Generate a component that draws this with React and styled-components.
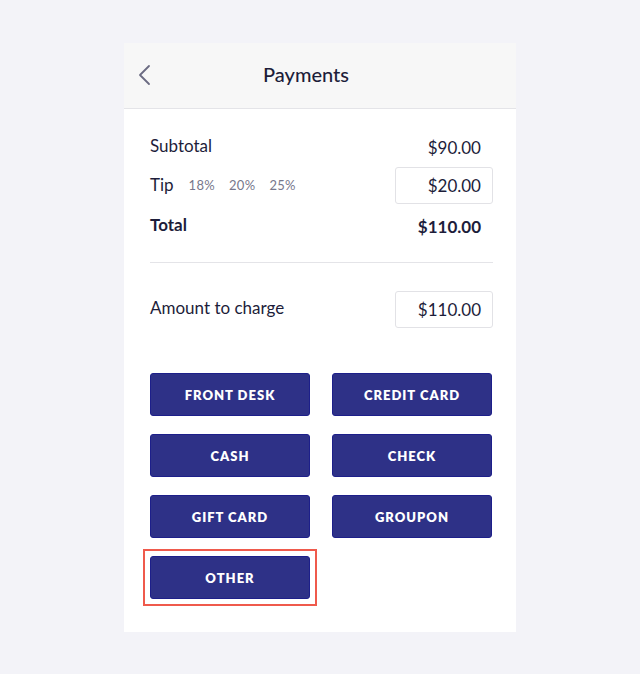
import React from 'react';
import styled, { createGlobalStyle } from 'styled-components';

const methods = ['FRONT DESK', 'CREDIT CARD', 'CASH', 'CHECK', 'GIFT CARD', 'GROUPON', 'OTHER'];

const App = () => {
    return (
        <Page>
            <GlobalStyle />
            <Card>
                <Header>
                    <Back>
                        <svg width="14" height="22" viewBox="0 0 14 22" fill="none">
                            <path d="M12 2 L3 11 L12 20" stroke="#6b6b82" strokeWidth="1.8" strokeLinecap="round" strokeLinejoin="round" />
                        </svg>
                    </Back>
                    <Title>Payments</Title>
                </Header>
                <Body>
                    <Summary>
                        <Row>
                            <Label>Subtotal</Label>
                            <Value>$90.00</Value>
                        </Row>
                        <Row>
                            <Label>
                                Tip
                                <Percents>
                                    <Percent>18%</Percent>
                                    <Percent>20%</Percent>
                                    <Percent>25%</Percent>
                                </Percents>
                            </Label>
                            <AmountBox>$20.00</AmountBox>
                        </Row>
                        <Row>
                            <Label bold>Total</Label>
                            <Value bold>$110.00</Value>
                        </Row>
                    </Summary>
                    <Divider />
                    <ChargeRow>
                        <Label shift={-4}>Amount to charge</Label>
                        <AmountBox>$110.00</AmountBox>
                    </ChargeRow>
                    <Methods>
                        {methods.map((m) => (
                            <Slot key={m} selected={m === 'OTHER'}>
                                <MethodButton>{m}</MethodButton>
                            </Slot>
                        ))}
                    </Methods>
                </Body>
            </Card>
        </Page>
    );
};

export default App;

const GlobalStyle = createGlobalStyle`
  html, body {
    margin: 0;
    padding: 0;
    background: #f3f3f8;
  }
  body {
    font-family: Lato, "Noto Sans", sans-serif;
    color: #1d1d3a;
  }
`;

const Page = styled.div`
  width: 640px;
  height: 674px;
  box-sizing: border-box;
  padding-top: 43px;
  display: flex;
  justify-content: center;
`;

const Card = styled.div`
  width: 392px;
  height: 589px;
  background: #ffffff;
  display: flex;
  flex-direction: column;
`;

const Header = styled.div`
  position: relative;
  height: 65px;
  background: #f7f7f7;
  border-bottom: 1px solid #e4e4e8;
  display: flex;
  align-items: center;
  justify-content: center;
`;

const Back = styled.div`
  position: absolute;
  left: 13px;
  top: 21px;
  display: flex;
`;

const Title = styled.div`
  font-size: 20px;
  font-weight: 500;
  color: #1d1d3a;
  margin-top: -3px;
  margin-right: 28px;
`;

const Body = styled.div`
  padding: 19px 23px 0 26px;
  display: flex;
  flex-direction: column;
`;

const Summary = styled.div`
  display: flex;
  flex-direction: column;
  gap: 3px;
`;

const Row = styled.div`
  display: flex;
  justify-content: space-between;
  align-items: center;
  min-height: 36px;
`;

const ChargeRow = styled(Row)`
  margin-top: 28px;
`;

const Label = styled.div`
  display: flex;
  align-items: center;
  font-size: 17px;
  font-weight: ${(p) => (p.bold ? 700 : 400)};
  color: #1d1d3a;
  margin-top: ${(p) => (p.shift !== undefined ? p.shift : -2)}px;
`;

const Value = styled.div`
  font-size: 17px;
  font-weight: ${(p) => (p.bold ? 700 : 400)};
  padding-right: 12px;
  margin-top: 2px;
`;

const Percents = styled.span`
  display: flex;
  gap: 14px;
  margin-left: 15px;
`;

const Percent = styled.span`
  font-size: 13px;
  color: #77778c;
  letter-spacing: 0.3px;
`;

const AmountBox = styled.div`
  width: 98px;
  height: 37px;
  box-sizing: border-box;
  border: 1px solid #e2e2e6;
  border-radius: 3px;
  display: flex;
  align-items: center;
  justify-content: flex-end;
  padding-right: 11px;
  font-size: 17px;
  color: #1d1d3a;
`;

const Divider = styled.div`
  height: 1px;
  background: #e4e4e8;
  margin-top: 19px;
`;

const Methods = styled.div`
  display: grid;
  grid-template-columns: 160px 160px;
  column-gap: 22px;
  row-gap: 18px;
  margin-top: 45px;
`;

const Slot = styled.div`
  position: relative;
  &::after {
    content: '';
    display: ${(p) => (p.selected ? 'block' : 'none')};
    position: absolute;
    left: -7px;
    top: -7px;
    right: -7px;
    bottom: -7px;
    border: 2px solid #ef5a4c;
    pointer-events: none;
  }
`;

const MethodButton = styled.button`
  width: 160px;
  height: 43px;
  background: #2e3187;
  border: 1px solid #1d1f8a;
  border-radius: 3px;
  color: #ffffff;
  font-family: Lato, "Noto Sans", sans-serif;
  font-size: 13px;
  font-weight: 800;
  letter-spacing: 1px;
  cursor: pointer;
`;
